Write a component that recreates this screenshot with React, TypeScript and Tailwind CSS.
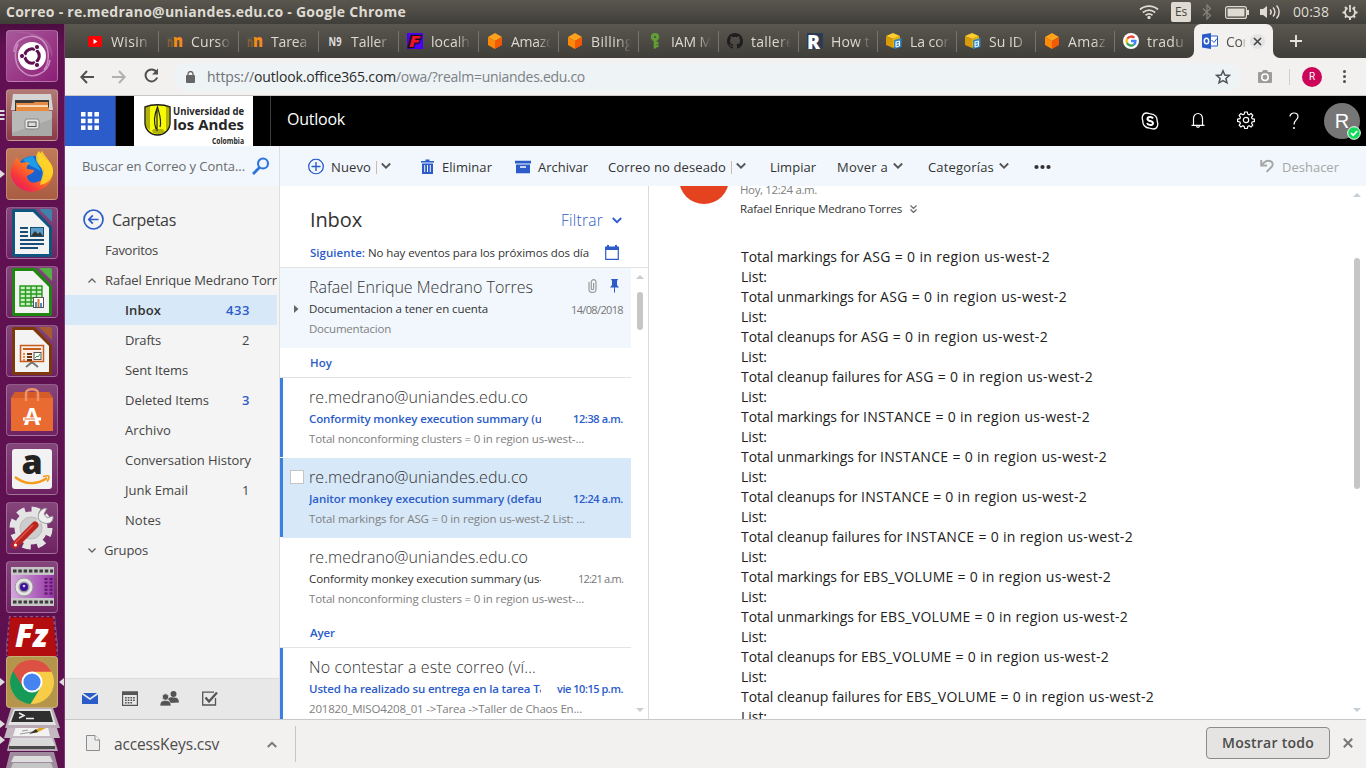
import React, { useLayoutEffect, useRef, useState } from "react";

/* Label that adjusts its tracking so the text fills exactly `w` pixels. */
function T({ w, className = "", children }: { w: number; className?: string; children: string }) {
  const ref = useRef<HTMLSpanElement>(null);
  const [ls, setLs] = useState(0);
  useLayoutEffect(() => {
    if (ref.current) {
      setLs((w - ref.current.getBoundingClientRect().width) / children.length);
    }
  }, []);
  return (
    <span className={"block shrink-0 whitespace-pre " + className} style={{ width: w }}>
      <span ref={ref} className="inline-block" style={{ letterSpacing: ls }}>
        {children}
      </span>
    </span>
  );
}

const Chevron = ({ className = "" }: { className?: string }) => (
  <svg className={"shrink-0 " + className} width="10" height="7" viewBox="0 0 10 7" fill="none" stroke="currentColor" strokeWidth="1.8">
    <path d="M0.8 1 5 5.2 9.2 1" />
  </svg>
);

/* ---------- Desktop launcher ---------- */

const Tile = ({ bg = "bg-linear-to-b from-[#84457a] to-[#6f2263]", left = false, right = false, children }: { bg?: string; left?: boolean; right?: boolean; children: React.ReactNode }) => (
  <div className={"relative h-[52px] w-[52px] shrink-0 rounded-[4px] border border-white/25 " + bg}>
    <svg width="50" height="50" viewBox="1 1 50 50">{children}</svg>
    {left && <svg className="absolute top-[20px] -left-[7px]" width="6" height="10"><path d="M0 1 5 5 0 9Z" fill="#ddd" /></svg>}
    {right && <svg className="absolute top-[20px] -right-[7px]" width="6" height="10"><path d="M6 1 1 5 6 9Z" fill="#ddd" /></svg>}
  </div>
);

const Doc = ({ c, d, children }: { c: string; d: string; children: React.ReactNode }) => (
  <>
    <path d="M8 2H29L46 20V48a2 2 0 0 1-2 2H8a2 2 0 0 1-2-2V4a2 2 0 0 1 2-2Z" fill={d} />
    <path d="M33 2H44a2 2 0 0 1 2 2V15Z" fill={c} />
    <path d="M9 5H27L43 21V47H9Z" fill="#f3f3f3" />
    {children}
  </>
);

function Launcher() {
  return (
    <div className="flex w-[65px] shrink-0 flex-col items-start gap-[7px] overflow-hidden border-r border-[#7d3a72] bg-[#5f1150] bg-linear-to-b from-[#4c0d40] via-[#611152] via-3% to-[#5c104e] pt-[6px] pl-[6px]">
      <Tile bg="bg-linear-to-br from-[#a8589b] to-[#8d1c78]">
        <path d="M8 22C8 8 26 2 36 10c8 7 8 22 2 30M44 30C42 44 26 50 17 42 8 36 8 22 12 14" stroke="#c98bc0" strokeWidth="1.6" fill="none" />
        <path d="M4 2C14 2 40 2 46 28 50 10 30 0 4 2Z" fill="#fff" opacity=".12" />
        <circle cx="26" cy="26" r="14" fill="#fff" />
        <circle cx="26" cy="26" r="7.2" fill="none" stroke="#5d1152" strokeWidth="3.2" />
        <path d="M26 26H14M26 26l6-10M26 26l6 10" stroke="#fff" strokeWidth="1.3" />
        <circle cx="26" cy="26" r="5.4" fill="#fff" />
        <g fill="#5d1152" stroke="#fff" strokeWidth="1"><circle cx="16" cy="26" r="2.6" /><circle cx="31" cy="17" r="2.6" /><circle cx="31" cy="35" r="2.6" /></g>
      </Tile>
      <div className="relative">
        <Tile bg="bg-linear-to-b from-[#b27a76] to-[#8b3a4a]">
          <path d="M7 5H45L47 21H5Z" fill="#d4d4d2" />
          <path d="M9 11H43V22H9Z" fill="#3b3835" />
          <path d="M10 14h17l2-1h13v9H10Z" fill="#e38b47" />
          <path d="M11 16H42V18H11Z" fill="#f7d9b8" /><path d="M10 18.500H43V22H10Z" fill="#e78a3e" />
          <path d="M6 22H46V47H6Z" fill="#a9a9a7" /><path d="M6 22H46V30L6 44Z" fill="#b9b9b7" />
          <rect x="19" y="30" width="14" height="10" rx="2" fill="#e6e6e5" stroke="#888" />
          <rect x="22" y="33" width="8" height="4.5" fill="#ddd" stroke="#555" />
        </Tile>
        <svg className="absolute top-[20px] -left-[6px]" width="5" height="13"><path d="M0 1h4l1 1-1 1H0ZM0 5h4l1 1-1 1H0ZM0 9h4l1 1-1 1H0Z" fill="#ddd" /></svg>
      </div>
      <Tile bg="bg-linear-to-b from-[#c17b59] to-[#a95d43]" left>
        <defs>
          <linearGradient id="fox" x1="1" y1="0" x2="0.2" y2="1"><stop offset="0" stopColor="#ffe53a" /><stop offset=".45" stopColor="#ff8a1c" /><stop offset=".8" stopColor="#f8353c" /><stop offset="1" stopColor="#e41c65" /></linearGradient>
        </defs>
        <circle cx="27" cy="25" r="17" fill="#1c63d0" />
        <path d="M27 8a17 17 0 0 0-10 4l6 5 12 6Z" fill="#1b9be8" />
        <path d="M5 25C5 18 9 14 10 9l5 6c3-1 6-1 9 0-3 2-4 4-3 6l7 1c0 3-4 4-7 6 0 5 5 8 10 6 5-1 8-5 7-11-3-5-7-9-5-16l3-4c3 6 11 11 11 22a21.5 21.5 0 0 1-42 3Z" fill="url(#fox)" />
        <path d="M33 3c-4 5-4 9 0 14 3 4 5 7 3 12l-2 8c8-1 14-8 13-16C46 13 37 11 33 3Z" fill="#ffd928" opacity=".85" />
      </Tile>
      <Tile>
        <Doc c="#3f83ad" d="#0f5580">
          <path d="M14 21h8M14 25h8M14 29h8M14 33h24M14 37h24M14 41h18" stroke="#174f78" strokeWidth="2" />
          <rect x="24.5" y="20.500" width="13" height="9" fill="#5b9dc8" stroke="#174f78" /><path d="M25 29l4-5 3 3 2-2 3 4Z" fill="#333" />
        </Doc>
      </Tile>
      <Tile>
        <Doc c="#53b148" d="#20860f">
          <path d="M14 20H36V40H14ZM14 24H36M14 28H36M14 32H36M14 36H36M19.500 20V40M25 20V40M30.500 20V40" stroke="#259a1c" strokeWidth="1.4" fill="#cdeec4" />
          <rect x="27.500" y="31.500" width="10" height="10" fill="#fff" stroke="#555" /><path d="M30 36v5M35 37v4" stroke="#4c8fc8" strokeWidth="2" /><path d="M32.500 33v8" stroke="#e37325" strokeWidth="2" />
        </Doc>
      </Tile>
      <Tile>
        <Doc c="#a85a31" d="#7d380c">
          <rect x="14.500" y="20.500" width="23" height="16" fill="#f8eee5" stroke="#c75c1f" strokeWidth="1.500" />
          <path d="M17 24H35" stroke="#c75c1f" strokeWidth="2" /><path d="M17 29h2M17 32h2M17 35h2" stroke="#e08b57" strokeWidth="1.800" /><path d="M21 29h5M21 32h5M21 35h5" stroke="#6b3510" strokeWidth="1.800" />
          <rect x="28" y="27.500" width="7" height="7" fill="#fff" stroke="#555" /><path d="M29 33l2-2 1 1 2-3" stroke="#2c9c31" fill="none" />
          <path d="M26 37v2M20 42l5-4h2l5 4" stroke="#777" strokeWidth="2" fill="none" />
        </Doc>
      </Tile>
      <Tile>
        <path d="M5 14 9 8H43L47 14V47H5Z" fill="#ea6b32" /><path d="M5 14 9 8H43L47 14Z" fill="#d55b28" />
        <path d="M20 17V9c0-5 12-5 12 0V17" stroke="#f0916a" strokeWidth="2.500" fill="none" />
        <text x="26" y="40.500" textAnchor="middle" fontFamily="Open Sans" fontWeight="700" fontSize="23" fill="#fff">A</text>
        <path d="M17 35H35" stroke="#fff" strokeWidth="3.200" fill="none" /><path d="M18.500 35H29" stroke="#ea6b32" strokeWidth="1" />
      </Tile>
      <Tile>
        <rect x="6" y="6" width="40" height="40" rx="3" fill="#f2f2f2" />
        <text x="26" y="31" textAnchor="middle" fontFamily="Open Sans" fontWeight="800" fontSize="34" fill="#222">a</text>
        <path d="M9 34c10 8 22 8 32 1" stroke="#f79a1c" strokeWidth="2.400" fill="none" /><path d="M37 33.500c4-1 6-1 6 0s-1 4-2 5" stroke="#f79a1c" strokeWidth="1.600" fill="none" />
      </Tile>
      <Tile>
        <circle cx="25" cy="26" r="18.500" fill="none" stroke="#e4e4e4" strokeWidth="6" strokeDasharray="8 6.530" />
        <circle cx="25" cy="26" r="14" fill="#e4e4e4" stroke="#e4e4e4" strokeWidth="5" /><circle cx="25" cy="26" r="11" fill="#cdcdcd" stroke="#bbb" />
        <path d="M29 23 37 15" stroke="#ddd" strokeWidth="5" /><path d="M34 19c-4-4-1-13 7-13l-3 6 3 4 6-2c1 7-6 10-13 5Z" fill="#efefef" stroke="#888" strokeWidth=".8" />
        <path d="M9 43 29 23" stroke="#bd2520" strokeWidth="7" strokeLinecap="round" /><path d="M9 41 27 23" stroke="#e0564f" strokeWidth="1.500" /><circle cx="9.500" cy="43" r="1.500" fill="#fff" />
      </Tile>
      <Tile>
        <defs><linearGradient id="film" x1="0" x2="1"><stop offset="0" stopColor="#d5a7dd" /><stop offset="1" stopColor="#9536a5" /></linearGradient></defs>
        <rect x="5" y="6" width="43" height="39" fill="url(#film)" />
        <path d="M5 6H48V14H5ZM5 37H48V45H5Z" fill="#c7c7c7" />
        <path d="M7 10H47M7 41H47" stroke="#3b3b3b" strokeWidth="3" strokeDasharray="3.500 1.800" />
        <path d="M40 17V34M45 17V34" stroke="#5d1569" strokeWidth="3" strokeDasharray="2 1.600" />
        <circle cx="18" cy="26" r="9" fill="#e4e4e4" stroke="#999" /><circle cx="18" cy="26" r="5.500" fill="#999" /><circle cx="18" cy="26" r="4" fill="#3b1399" /><circle cx="18" cy="25" r="1.300" fill="#d5c5ff" />
      </Tile>
      <div className="-mt-[4px] flex h-[155px] w-[59px] shrink-0 flex-col items-start">
        <svg className="shrink-0" width="52" height="40" viewBox="0 0 52 40">
          <path d="M3 0H49L53 40H-1Z" fill="#93507f" />
          <path d="M4 1H47L51 40H1Z" fill="#b40d0f" />
          <path d="M5 1H47M3 3 1 39M48 3 51 39" stroke="#5f1150" strokeWidth="1.800" strokeDasharray="2.500 3" fill="none" />
          <text x="9" y="31" fontFamily="Open Sans" fontStyle="italic" fontWeight="800" fontSize="32" fill="#fff" textLength="33" lengthAdjust="spacingAndGlyphs">Fz</text>
        </svg>
        <Tile bg="bg-[#b5954b]" left right>
          <circle cx="26" cy="26" r="22" fill="#f7cc46" />
          <path d="M26 26 7 15A22 22 0 0 1 45.300 15.500H26Z" fill="#dd4b3e" />
          <path d="M26 26 7 15a22 22 0 0 0 17.500 33L35 31Z" fill="#159a58" />
          <path d="M7 15 17 31l9-15.500H45.300A22 22 0 0 0 7 15Z" fill="#dd5144" />
          <circle cx="26" cy="26" r="10.500" fill="#fff" /><circle cx="26" cy="26" r="8.600" fill="#4583f0" />
        </Tile>
        <svg className="-ml-[6px] shrink-0" width="65" height="60" viewBox="0 0 65 60">
          <path d="M10 44H54L58 60H6Z" fill="#a08a9d" /><path d="M14 48H50L53 54H11Z" fill="#ddd" /><path d="M13 55H51L53 60H11Z" fill="#c5c5c5" />
          <path d="M10 30H54L58 43H7Z" fill="#b7a7b4" /><path d="M12 30H52L55 38H9Z" fill="#d9d9d9" /><path d="M9 38H55V41H9Z" fill="#4a4a4a" />
          <path d="M9 14H55L60 30H4Z" fill="#c4b8c1" /><path d="M17 15H47L50 28H13Z" fill="#f2f2f2" /><path d="M20 26 32 24M22 23 28 22" stroke="#999" /><path d="M32 24 44 17l2 3-10 5Z" fill="#d9a520" /><path d="M29 26 36 21l2 3Z" fill="#333" />
          <path d="M11 0H53L60 20H5Z" fill="#b8abb5" /><path d="M14 1H51L56 17H8Z" fill="#e2e2e2" /><path d="M15 3H50L53 14H11Z" fill="#2f2f2f" />
          <path d="M19 5l5 2.500-5 2.500M26 10.500h8" stroke="#eee" strokeWidth="1.500" fill="none" />
          <path d="M0 12 5 16 0 20ZM0 28 5 32 0 36Z" fill="#ddd" />
        </svg>
      </div>
    </div>
  );
}

/* ---------- Tab strip ---------- */

const Cube = () => <><path d="M8 0 15 4 8 8 1 4Z" fill="#ffa21c" /><path d="M1 4 8 8V16L1 12Z" fill="#ff8a0a" /><path d="M15 4 8 8V16L15 12Z" fill="#f45a04" /></>;
const Moodle = () => (
  <>
    <path d="M0 6 8 3" stroke="#555" strokeWidth="1.500" />
    <text x="0" y="13.500" fontFamily="Open Sans" fontWeight="700" fontSize="14" fill="#8a6238" textLength="6" lengthAdjust="spacingAndGlyphs">n</text>
    <text x="6" y="13.500" fontFamily="Open Sans" fontWeight="800" fontSize="17" fill="#f58a1c" textLength="10" lengthAdjust="spacingAndGlyphs">n</text>
  </>
);
const AwsDoc = () => <><path d="M7 0 14 3 7 6 0 3Z" fill="#ffce2e" /><path d="M0 3 7 6V15L0 12Z" fill="#d89a06" /><path d="M7 6 14 3V9L7 15Z" fill="#f0b400" /><path d="M8 7 15.500 5V14L8 16Z" fill="#2f86c4" /><path d="M10 9 13.500 8M10 11.500 13.500 10.500M10 14 13.500 13M10 8.500V14M13.500 8V13" stroke="#fff" /></>;

const tabs: { label: string; w: number; icon: React.ReactNode }[] = [
  { label: "Wisin", w: 37, icon: <><rect x="1" y="3" width="14" height="11" rx="2.500" fill="#f00" /><path d="M6.500 6 10.500 8.500 6.500 11Z" fill="#fff" /></> },
  { label: "Curso", w: 39, icon: <Moodle /> },
  { label: "Tarea", w: 36, icon: <Moodle /> },
  { label: "Taller", w: 36, icon: <text x="1.500" y="12.500" fontFamily="Open Sans" fontWeight="700" fontSize="11.500" fill="#ddd" textLength="13" lengthAdjust="spacingAndGlyphs">N9</text> },
  { label: "localh", w: 39, icon: <><rect width="16" height="16" fill="#4b00f5" /><text x="2" y="14" fontFamily="Open Sans" fontStyle="italic" fontWeight="800" fontSize="15.500" fill="#f0102a" stroke="#111" strokeWidth="2.500" paintOrder="stroke" textLength="11" lengthAdjust="spacingAndGlyphs">F</text></> },
  { label: "Amazo", w: 43, icon: <Cube /> },
  { label: "Billing", w: 42, icon: <Cube /> },
  { label: "IAM M", w: 41, icon: <><circle cx="8" cy="4" r="2.600" fill="none" stroke="#609e35" strokeWidth="3.200" /><path d="M8 6V15.500M9 10h2.500M9 13h2.500" stroke="#609e35" strokeWidth="2.600" /></> },
  { label: "tallere", w: 43, icon: <path fill="#1e1e1e" d="M8 0C3.580 0 0 3.580 0 8c0 3.540 2.290 6.530 5.470 7.590.4.070.55-.17.55-.38 0-.19-.01-.82-.01-1.490-2.010.37-2.530-.49-2.690-.94-.09-.23-.48-.94-.82-1.130-.28-.15-.68-.52-.01-.53.63-.01 1.080.58 1.230.82.72 1.210 1.870.87 2.330.66.07-.52.28-.87.51-1.070-1.780-.2-3.640-.89-3.640-3.950 0-.87.31-1.590.82-2.150-.08-.2-.36-1.020.08-2.120 0 0 .67-.21 2.200.82a7.600 7.600 0 0 1 4 0c1.530-1.040 2.200-.82 2.200-.82.44 1.100.16 1.920.08 2.120.51.56.82 1.270.82 2.150 0 3.070-1.870 3.750-3.650 3.950.29.25.54.73.54 1.480 0 1.070-.01 1.930-.01 2.200 0 .21.15.46.55.38A8 8 0 0 0 16 8c0-4.420-3.580-8-8-8Z" /> },
  { label: "How t", w: 39, icon: <><rect width="16" height="16" fill="#2b3b55" /><text x="0" y="15.500" fontFamily="Open Sans" fontWeight="800" fontSize="20" fill="#fff" textLength="13" lengthAdjust="spacingAndGlyphs">R</text></> },
  { label: "La con", w: 42, icon: <AwsDoc /> },
  { label: "Su ID", w: 34, icon: <AwsDoc /> },
  { label: "Amaz", w: 38, icon: <Cube /> },
  { label: "tradu", w: 37, icon: <><circle cx="8" cy="8" r="8" fill="#fff" /><g fill="none" strokeWidth="2.300"><path d="M4.300 5.800A4.500 4.500 0 0 1 11.400 4.800" stroke="#ea4335" /><path d="M4.100 5.800a4.500 4.500 0 0 0 0 4.400" stroke="#fbbc05" /><path d="M4.100 10a4.500 4.500 0 0 0 6.700 1.700" stroke="#34a853" /><path d="M8 8h4.500a4.500 4.500 0 0 1-1.700 3.700" stroke="#4285f4" /></g></> },
];

function TabStrip() {
  return (
    <div className="flex h-[34px] shrink-0 items-center bg-linear-to-b from-[#5a574f] to-[#403e39] pl-[14px] text-[14px] text-[#dcd9cf]">
      {tabs.map((t, i) => (
        <div key={i} className={(i < 9 ? "w-[80px]" : "w-[79px]") + " flex h-[21px] shrink-0 items-center pl-[8px] " + (i === 13 ? "" : "border-r border-[#77746b]")}>
          <svg className="shrink-0" width="16" height="16" viewBox="0 0 16 16">{t.icon}</svg>
          <div className="ml-[8px] w-[40px] mask-r-from-65% mask-r-to-100%"><T w={t.w}>{t.label}</T></div>
        </div>
      ))}
      <div className="relative flex h-full w-[79px] shrink-0 items-center rounded-t-[7px] bg-[#f2f1f0] pl-[8px] text-[#55534d]">
        <svg className="shrink-0" width="16" height="16" viewBox="0 0 16 16"><path d="M8 3h7.500v10H8Z" fill="#fff" stroke="#2a5cc9" /><path d="M9.500 7 12 9.500 15 5.500" stroke="#2a5cc9" fill="none" /><path d="M0 1.500 9 0V16L0 14.500Z" fill="#2a5cc9" /><ellipse cx="4.500" cy="8" rx="2.200" ry="2.800" fill="none" stroke="#fff" strokeWidth="1.500" /></svg>
        <div className="ml-[8px] w-[20px] overflow-hidden mask-r-from-75%"><T w={22}>Cor</T></div>
        <div className="ml-[4px] flex h-[15px] w-[15px] items-center justify-center rounded-full bg-[#e3e3e4]"><svg width="9" height="9" viewBox="0 0 9 9"><path d="M1 1 8 8M8 1 1 8" stroke="#444" strokeWidth="1.600" /></svg></div>
        <svg className="absolute bottom-0 -left-[7px]" width="7" height="7"><path d="M7 0V7H0A7 7 0 0 0 7 0Z" fill="#f2f1f0" /></svg>
        <svg className="absolute -right-[7px] bottom-0" width="7" height="7"><path d="M0 0V7H7A7 7 0 0 1 0 0Z" fill="#f2f1f0" /></svg>
      </div>
      <svg className="ml-[17px]" width="12" height="12" viewBox="0 0 12 12"><path d="M6 0V12M0 6H12" stroke="#e5e3db" strokeWidth="1.900" /></svg>
    </div>
  );
}

function AddressBar() {
  return (
    <div className="flex h-[38px] shrink-0 items-center border-b border-[#c9c8c6] bg-[#f2f1f0] text-[14px]">
      <svg className="ml-[15px] shrink-0" width="14" height="14" viewBox="0 0 14 14" fill="none" stroke="#505050" strokeWidth="2"><path d="M14 7H1.500M7 1 1.300 7 7 13" /></svg>
      <svg className="ml-[18px] shrink-0" width="14" height="14" viewBox="0 0 14 14" fill="none" stroke="#b1b0af" strokeWidth="2"><path d="M0 7H12.500M7 1 12.700 7 7 13" /></svg>
      <svg className="ml-[18px] shrink-0 -translate-y-[1px]" width="15" height="15" viewBox="0 0 15 15"><path d="M12.500 4A6 6 0 1 0 13.200 9.500" fill="none" stroke="#505050" strokeWidth="2" /><path d="M14 0.500V6.500H8Z" fill="#505050" /></svg>
      <div className="ml-[15px] flex h-[28px] w-[1066px] items-center rounded-full bg-[#eef3f5] pl-[12px]">
        <svg className="shrink-0" width="9" height="12" viewBox="0 0 9 12"><rect y="4" width="9" height="8" rx="1" fill="#666" /><path d="M2 5V3a2.500 2.500 0 0 1 5 0v2" stroke="#666" strokeWidth="1.300" fill="none" /></svg>
        <div className="ml-[12px] flex">
          <T w={47} className="text-[#6d7275]">https://</T>
          <T w={142} className="text-[#2a2a2a]">outlook.office365.com</T>
          <T w={189} className="text-[#7c8185]">/owa/?realm=uniandes.edu.co</T>
        </div>
        <svg className="mr-[9px] ml-auto shrink-0" width="16" height="16" viewBox="0 0 16 16"><path d="M8 1.800 9.800 6 14.300 6.400 10.900 9.400 12 13.800 8 11.500 4 13.800 5.100 9.400 1.700 6.400 6.200 6Z" fill="none" stroke="#505458" strokeWidth="1.500" /></svg>
      </div>
      <svg className="ml-[18px] shrink-0" width="14" height="13" viewBox="0 0 14 13"><path d="M1 2H4L5 0H9L10 2H13a1 1 0 0 1 1 1V12a1 1 0 0 1-1 1H1a1 1 0 0 1-1-1V3a1 1 0 0 1 1-1Z" fill="#9c9c9c" /><circle cx="7" cy="7.300" r="3.200" fill="#9c9c9c" stroke="#fff" strokeWidth="1.500" /></svg>
      <div className="ml-[17px] h-4 w-px bg-[#cfcecc]" />
      <div className="ml-[12px] flex h-5 w-5 items-center justify-center rounded-full bg-[#cc0558] font-[Roboto] text-[10px] text-white">R</div>
      <div className="ml-[21px] flex flex-col gap-[2px]"><i className="h-[3px] w-[3px] rounded-full bg-[#505050]" /><i className="h-[3px] w-[3px] rounded-full bg-[#505050]" /><i className="h-[3px] w-[3px] rounded-full bg-[#505050]" /></div>
    </div>
  );
}

/* ---------- Outlook ---------- */

function OutlookHeader() {
  return (
    <div className="flex h-[50px] shrink-0 items-center bg-black text-white">
      <div className="flex h-full w-[51px] shrink-0 items-center justify-center border-r border-[#26407e] bg-[#2b5cca]">
        <svg width="18" height="18" viewBox="0 0 18 18" fill="#fff">
          {[0, 7, 14].map((y) => [0, 7, 14].map((x) => <rect key={x + "-" + y} x={x * 0.96} y={y * 0.96} width="4.500" height="4.500" />))}
        </svg>
      </div>
      <svg className="ml-[18px] shrink-0 bg-white" width="119" height="50" viewBox="0 0 119 50">
        <path d="M11 11C18 8 29 8 36 11V27C36 33 31 39 23.500 39 16 39 11 33 11 27Z" fill="#f7fb05" stroke="#1a1a1a" strokeWidth="1.400" />
        <path d="M11 11c2-2 4-2 5-2v25c-3-2-5-4-5-8ZM36 11c-2-2-3-2-4-2v26c3-2 4-5 4-9ZM18 36c5 3 9 2 13 0l-2-3H19Z" fill="#5c5c14" opacity=".45" />
        <path d="M22 33C19 25 21 17 23.500 11 25 17 28 24 26 31M23 14V35" fill="none" stroke="#222" strokeWidth="1.200" />
        <g fontFamily="Open Sans" fontWeight="700" fill="#262626">
          <text x="39" y="19" fontSize="11" textLength="71" lengthAdjust="spacingAndGlyphs">Universidad de</text>
          <text x="39" y="34" fontSize="15" textLength="71" lengthAdjust="spacingAndGlyphs">los Andes</text>
          <text x="78" y="47.500" fontSize="8" textLength="32" lengthAdjust="spacingAndGlyphs">Colombia</text>
        </g>
      </svg>
      <div className="ml-[17px] h-full w-px bg-[#3c3c3c]" />
      <T w={58} className="ml-[16px] -translate-y-[2px] text-[16px]">Outlook</T>
      <svg className="mr-[32px] ml-auto shrink-0" width="18" height="18" viewBox="0 0 18 18" fill="none" stroke="#fff" strokeWidth="1.300"><path d="M5.500 1C8 1 8 1.800 9.500 1.800 14 1.800 16.500 5.500 16.200 9.500 17.500 12 16.500 17 12.500 17 11 17 10 16.200 8.500 16.200 4 16 1.500 12.500 1.800 8.500 0.500 6 1.500 1 5.500 1Z" /><path d="M12 6.500C11 4.500 6.500 4.500 6.500 7c0 2.500 5.500 1.500 5.500 4.200 0 2.500-5 2.300-6 0" strokeWidth="2" /></svg>
      <svg className="mr-[32px] shrink-0 -translate-y-[1px]" width="14" height="17" viewBox="0 0 14 17" fill="none" stroke="#fff" strokeWidth="1.200"><path d="M2.500 13V6.500a4.500 5 0 0 1 9 0V13M0.500 13.300H13.500M5.500 13.500c0 2.500 3 2.500 3 0" /></svg>
      <svg className="mr-[34px] shrink-0 -translate-y-[1px]" width="18" height="18" viewBox="0 0 18 18" fill="none" stroke="#fff" strokeWidth="1.200"><circle cx="9" cy="9" r="2.700" /><path d="M7.700 1h2.600l.5 2.200 1.300.6 2-1.200 1.700 1.800-1.200 2 .5 1.300 2.300.5v2.200l-2.300.5-.5 1.300 1.200 2-1.700 1.800-2-1.200-1.300.6-.5 2.100H7.700l-.5-2.100-1.300-.6-2 1.200-1.700-1.800 1.200-2-.5-1.300-2.300-.5V8.200l2.300-.5.500-1.300-1.200-2 1.700-1.800 2 1.200 1.300-.6Z" /></svg>
      <svg className="mr-[25px] shrink-0 -translate-y-[1px]" width="10" height="17" viewBox="0 0 10 17" fill="none" stroke="#fff" strokeWidth="1.200"><path d="M1 4.500C1 2.500 2.800 1 5 1s4 1.300 4 3.500C9 8 5 8 5 12.500" /><path d="M5 15V17" strokeWidth="1.500" /></svg>
      <div className="relative mr-[6px] flex h-9 w-9 shrink-0 items-center justify-center rounded-full bg-[#767676] font-['Liberation_Sans'] text-[20px]">
        R
        <svg className="absolute -right-[1px] -bottom-[1px]" width="14" height="14" viewBox="0 0 14 14"><circle cx="7" cy="7" r="6.300" fill="#12d95a" stroke="#fff" strokeWidth="1" /><path d="M4 7 6.200 9.300 10.200 5" stroke="#fff" strokeWidth="1.800" fill="none" /></svg>
      </div>
    </div>
  );
}

function CommandBar() {
  return (
    <div className="relative z-10 flex h-[40px] shrink-0 items-center bg-[#f1f7fc] pt-[3px] text-[13px] text-[#333]">
      <svg className="ml-[28px] shrink-0 -translate-y-[1.5px]" width="16" height="16" viewBox="0 0 16 16" fill="none" stroke="#2b5cca"><circle cx="8" cy="8" r="7.300" strokeWidth="1.300" /><path d="M8 3.500V12.500M3.500 8H12.500" strokeWidth="1.400" /></svg>
      <T w={40} className="ml-[7px]">Nuevo</T>
      <div className="ml-[5px] h-[13px] w-px bg-[#d0b9a5]" />
      <Chevron className="ml-[4px] -translate-y-[1.5px] text-[#555]" />
      <svg className="ml-[30px] shrink-0 -translate-y-[1px]" width="13" height="15" viewBox="0 0 13 15"><path d="M4.500 0.500H8.500V2H13V3.500H0V2H4.500ZM1 4.500H12V15H1Z" fill="#2b5cca" /><path d="M3.700 6V13M6.500 6V13M9.300 6V13" stroke="#eff6fc" strokeWidth="1" /></svg>
      <T w={50} className="ml-[8px]">Eliminar</T>
      <svg className="ml-[23px] shrink-0 -translate-y-[0.5px]" width="16" height="13" viewBox="0 0 16 13"><path d="M0 0H16V3H0ZM1 4H15V13H1Z" fill="#2b5cca" /><path d="M5 6.500H11" stroke="#fff" strokeWidth="1.300" /></svg>
      <T w={50} className="ml-[7px]">Archivar</T>
      <T w={118} className="ml-[20px]">Correo no deseado</T>
      <div className="ml-[5px] h-[13px] w-px bg-[#d0b9a5]" />
      <Chevron className="ml-[4px] -translate-y-[1.5px] text-[#555]" />
      <T w={46} className="ml-[24px]">Limpiar</T>
      <T w={51} className="ml-[21px]">Mover a</T>
      <Chevron className="ml-[5px] -translate-y-[1.5px] text-[#555]" />
      <T w={66} className="ml-[25px]">Categorías</T>
      <Chevron className="ml-[5px] -translate-y-[1.5px] text-[#555]" />
      <svg className="ml-[25px] shrink-0 -translate-y-[0.5px]" width="17" height="5"><circle cx="2.500" cy="2.500" r="2.100" fill="#333" /><circle cx="8.500" cy="2.500" r="2.100" fill="#333" /><circle cx="14.500" cy="2.500" r="2.100" fill="#333" /></svg>
      <svg className="mr-[8px] ml-auto shrink-0 -translate-y-[1.5px]" width="14" height="13" viewBox="0 0 14 13" fill="none" stroke="#a6a6a6" strokeWidth="1.900"><path d="M1.200 0.500V6H7M1.500 5.700C4 2.500 7 0.500 10 1.500 13 2.500 13.500 5 11.500 7.500L6.500 12.500" /></svg>
      <T w={57} className="mr-[27px] text-[#a6a6a6]">Deshacer</T>
    </div>
  );
}

const folders: [string, number, string, boolean][] = [
  ["Inbox", 36, "433", true], ["Drafts", 36, "2", false], ["Sent Items", 63, "", false], ["Deleted Items", 84, "3", false], ["Archivo", 46, "", false],
  ["Conversation History", 126, "", false], ["Junk Email", 63, "1", false], ["Notes", 36, "", false],
];

function FolderPane() {
  return (
    <div className="flex w-[215px] shrink-0 flex-col border-r border-[#dfdfdf] bg-[#f4f4f4] text-[13px] text-[#444]">
      <div className="flex h-[40px] shrink-0 items-center bg-[#f1f7fc] pl-[17px] text-[#6b6b6b]">
        <T w={163} className="translate-y-[1px]">Buscar en Correo y Conta...</T>
        <svg className="ml-[7px] shrink-0" width="18" height="18" viewBox="0 0 18 18" fill="none" stroke="#2f74dc"><circle cx="11" cy="6.500" r="5" strokeWidth="2.100" /><path d="M7.500 10.500 1 17" strokeWidth="2.700" /></svg>
      </div>
      <div className="mt-[19px] flex h-[30px] items-center pl-[18px]">
        <svg className="shrink-0 -translate-y-[1px]" width="21" height="21" viewBox="0 0 21 21" fill="none" stroke="#2b5cca" strokeWidth="1.700"><circle cx="10.500" cy="10.500" r="9.500" /><path d="M15.500 10.500H6M9.800 6.300 5.800 10.500 9.800 14.700" /></svg>
        <T w={64} className="ml-[8px] text-[16px] text-[#3b3b3b]">Carpetas</T>
      </div>
      <div className="flex h-[30px] items-center pt-[2px] pl-[40px]"><T w={53}>Favoritos</T></div>
      <div className="flex h-[30px] items-center overflow-hidden pt-[2px] pl-[23px]">
        <svg className="shrink-0 -translate-y-[1px]" width="8" height="5" fill="none" stroke="#666" strokeWidth="1.400"><path d="M0.500 4.500 4 1 7.500 4.500" /></svg>
        <T w={172} className="ml-[9px]">Rafael Enrique Medrano Torr</T>
      </div>
      {folders.map(([name, w, n, on]) => (
        <div key={name} className={"mr-[2px] flex h-[30px] items-center justify-between pt-[2px] pr-[27px] pl-[60px] " + (on ? "bg-[#d7e8f8] font-semibold text-[#333]" : "")}>
          <T w={w}>{name}</T>
          {n && <T w={n.length * 8} className={on || n === "3" ? "font-semibold text-[#2b5cca]" : ""}>{n}</T>}
        </div>
      ))}
      <div className="flex h-[30px] items-center pt-[2px] pl-[23px]">
        <svg className="shrink-0 -translate-y-[1px]" width="8" height="5" fill="none" stroke="#666" strokeWidth="1.400"><path d="M0.500 0.500 4 4 7.500 0.500" /></svg>
        <T w={44} className="ml-[8px]">Grupos</T>
      </div>
      <div className="mt-auto flex h-[41px] shrink-0 items-center border-t border-[#dcdcdc] bg-[#e8e8e8] pl-[17px]">
        <svg className="shrink-0 -translate-y-[1px]" width="16" height="11" viewBox="0 0 16 11"><path d="M0 1.500 8 7 16 1.500V11H0Z" fill="#2b5cca" /><path d="M1 0H15L8 5Z" fill="#2b5cca" /></svg>
        <svg className="ml-[24px] shrink-0 -translate-y-[1px]" width="16" height="15" viewBox="0 0 16 15"><path d="M0.600 1H15.400V14.400H0.600Z" fill="none" stroke="#555" strokeWidth="1.200" /><path d="M0 0.500H16V4H0Z" fill="#555" /><path d="M3 6.700H13.500M3 9.200H13.500M3 11.700H11" stroke="#555" strokeWidth="1.500" strokeDasharray="1.700 1" /></svg>
        <svg className="ml-[22px] shrink-0 -translate-y-[1px]" width="19" height="15" viewBox="0 0 19 15" fill="#555"><circle cx="13.500" cy="3" r="3" /><path d="M9.500 12V9.500L7.500 8C9 6.500 11 6 13.500 6.500 17 6 19 8 19 11.500Z" /><g stroke="#e8e8e8" strokeWidth=".7"><circle cx="5.500" cy="6" r="3.200" /><path d="M0 15C0 10.500 2 9.500 5.500 9.500S11 10.500 11 15Z" /></g></svg>
        <svg className="ml-[23px] shrink-0 -translate-y-[1px]" width="16" height="15" viewBox="0 0 16 15" fill="none" stroke="#555"><path d="M13.500 7V14H0.700V1.200H12" strokeWidth="1.300" /><path d="M3.500 6.500 7 10.500 15 1.500" strokeWidth="2.300" /></svg>
      </div>
    </div>
  );
}

type Mail = { from: string; fw: number; subj: string; sw: number; time: string; tw: number; prev: string; pw: number; unread?: boolean; selected?: boolean };

function MailRow({ m }: { m: Mail }) {
  return (
    <div className="flex h-[80px] w-[351px] shrink-0">
      <div className={"mb-px w-[3px] " + (m.unread ? "bg-[#3b7fe0]" : "")} />
      <div className={"flex flex-1 flex-col pt-[9px] " + (m.selected ? "bg-[#d7e8f8]" : "")}>
        <div className="flex h-[20px] items-center pl-[7px]">
          <div className={"h-[14px] w-[14px] shrink-0 " + (m.selected ? "border border-[#c5c5c5] bg-white" : "")} />
          <T w={m.fw} className="ml-[5px] text-[16px] leading-5 font-[350] text-[#333]">{m.from}</T>
        </div>
        <div className={"flex h-[24px] items-center justify-between pr-[8px] pl-[26px] text-[11.5px] " + (m.unread ? "font-semibold text-[#2b5cca]" : "text-[#333]")}>
          <div className="w-[232px] overflow-hidden"><T w={m.sw}>{m.subj}</T></div>
          <T w={m.tw} className={m.unread ? "text-[11px]" : "text-[11px] text-[#767676]"}>{m.time}</T>
        </div>
        <T w={m.pw} className="ml-[26px] text-[11.5px] leading-4 text-[#808080]">{m.prev}</T>
      </div>
    </div>
  );
}

const prevText = "Total nonconforming clusters = 0 in region us-west-...";
const today: Mail[] = [
  { from: "re.medrano@uniandes.edu.co", fw: 219, subj: "Conformity monkey execution summary (u", sw: 233, time: "12:38 a.m.", tw: 50, prev: prevText, pw: 275, unread: true },
  { from: "re.medrano@uniandes.edu.co", fw: 219, subj: "Janitor monkey execution summary (defau", sw: 233, time: "12:24 a.m.", tw: 50, prev: "Total markings for ASG = 0 in region us-west-2 List: ...", pw: 276, unread: true, selected: true },
  { from: "re.medrano@uniandes.edu.co", fw: 219, subj: "Conformity monkey execution summary (us-", sw: 234, time: "12:21 a.m.", tw: 45, prev: prevText, pw: 275 },
];
const yesterday: Mail = { from: "No contestar a este correo (ví...", fw: 227, subj: "Usted ha realizado su entrega en la tarea Ta", sw: 237, time: "vie 10:15 p.m.", tw: 66, prev: "201820_MISO4208_01 ->Tarea ->Taller de Chaos En...", pw: 273, unread: true };

const GroupHead = ({ label, w }: { label: string; w: number }) => (
  <div className="flex h-[30px] w-[351px] shrink-0 items-center border-b border-[#e3e3e3] pl-[30px] text-[11.5px] font-semibold text-[#2b5cca]"><T w={w}>{label}</T></div>
);

const Scroll = ({ thumb }: { thumb: string }) => (
  <div className="flex w-[18px] shrink-0 flex-col items-center pt-[7px] pb-[7px]">
    <svg className="shrink-0" width="8" height="4"><path d="M4 0 8 4H0Z" fill="#c5ced3" /></svg>
    <div className={"w-[6px] shrink-0 rounded-full bg-[#c6c6c6] " + thumb} />
    <svg className="mt-auto shrink-0" width="8" height="4"><path d="M0 0H8L4 4Z" fill="#c5ced3" /></svg>
  </div>
);

function MessageList() {
  return (
    <div className="flex w-[369px] shrink-0 flex-col overflow-hidden border-r border-[#dadada]">
      <div className="flex h-[82px] shrink-0 flex-col border-b border-[#e3e3e3] pt-[20px]">
        <div className="flex h-[28px] items-center pl-[30px]">
          <T w={52} className="text-[20px] text-[#333]">Inbox</T>
          <T w={42} className="ml-[199px] translate-y-[1px] text-[15.5px] font-[350] text-[#2b5cca]">Filtrar</T>
          <Chevron className="ml-[9px] text-[#2b5cca]" />
        </div>
        <div className="mt-[9px] flex h-[20px] items-center pl-[30px] text-[11.5px]">
          <T w={55} className="font-semibold text-[#2b5cca]">Siguiente:</T>
          <T w={221} className="ml-[3px] text-[#333]">No hay eventos para los próximos dos día</T>
          <svg className="ml-[16px] shrink-0 -translate-y-[1px]" width="14" height="15" viewBox="0 0 14 15"><path d="M0.700 2.200H13.300V14.300H0.700Z" fill="none" stroke="#2b5cca" strokeWidth="1.200" /><path d="M0 2H14V5H0ZM2 0H4V3H2ZM10 0H12V3H10Z" fill="#2b5cca" /></svg>
        </div>
      </div>
      <div className="flex min-h-0 flex-1">
        <div className="flex w-[351px] shrink-0 flex-col overflow-hidden">
          <div className="flex h-[80px] shrink-0 flex-col bg-[#f1f7fc] pt-[9px]">
            <div className="flex h-[20px] items-center pl-[29px]">
              <T w={224} className="text-[16px] leading-5 font-[350] text-[#333]">Rafael Enrique Medrano Torres</T>
              <svg className="ml-[55px] shrink-0 -translate-y-[1px]" width="9" height="14" viewBox="0 0 9 14" fill="none" stroke="#999" strokeWidth="1.200"><path d="M1 3V10a3.400 3.400 0 0 0 7 0V3a2.200 2.200 0 0 0-4.700 0V9.500a1.100 1.100 0 0 0 2.300 0V4" /></svg>
              <svg className="ml-[13px] shrink-0 -translate-y-[1px]" width="9" height="14" viewBox="0 0 9 14" fill="#2b5cca"><path d="M1.200 0H7.800V1.200H7V6L9 8.500H5V13.500H4V8.500H0L2 6V1.200H1.200Z" /></svg>
            </div>
            <div className="flex h-[24px] items-center pl-[14px] text-[11.5px]">
              <svg className="shrink-0" width="5" height="8"><path d="M0 0 4.500 4 0 8Z" fill="#666" /></svg>
              <T w={179} className="ml-[10px] text-[#333]">Documentacion a tener en cuenta</T>
              <T w={52} className="ml-[83px] translate-y-[0.5px] text-[11px] text-[#767676]">14/08/2018</T>
            </div>
            <T w={82} className="ml-[29px] text-[11.5px] leading-4 text-[#808080]">Documentacion</T>
          </div>
          <GroupHead label="Hoy" w={22} />
          {today.map((m, i) => <MailRow key={i} m={m} />)}
          <GroupHead label="Ayer" w={25} />
          <MailRow m={yesterday} />
        </div>
        <Scroll thumb="mt-[13px] h-[38px]" />
      </div>
    </div>
  );
}

/* Each line is set in two runs: the words up to the resource name, then the rest. */
const lines: [string, number, string, number][] = [
  ["Total markings for ", 122, "ASG = 0 in region us-west-2", 187], ["Total unmarkings for ", 139, "ASG = 0 in region us-west-2", 187],
  ["Total cleanups for ", 120, "ASG = 0 in region us-west-2", 187], ["Total cleanup failures for ", 165, "ASG = 0 in region us-west-2", 187],
  ["Total markings for ", 122, "INSTANCE = 0 in region us-west-2", 227], ["Total unmarkings for ", 139, "INSTANCE = 0 in region us-west-2", 227],
  ["Total cleanups for ", 120, "INSTANCE = 0 in region us-west-2", 226], ["Total cleanup failures for ", 165, "INSTANCE = 0 in region us-west-2", 227],
  ["Total markings for ", 122, "EBS_VOLUME = 0 in region us-west-2", 248], ["Total unmarkings for ", 139, "EBS_VOLUME = 0 in region us-west-2", 248],
  ["Total cleanups for ", 120, "EBS_VOLUME = 0 in region us-west-2", 248], ["Total cleanup failures for ", 165, "EBS_VOLUME = 0 in region us-west-2", 248],
];

function Reader() {
  return (
    <div className="flex min-w-0 flex-1">
      <div className="flex min-w-0 flex-1 flex-col">
        <div className="flex h-[61px] shrink-0 pl-[30px]">
          <div className="-mt-[32px] flex h-[50px] w-[50px] shrink-0 items-center justify-center rounded-full bg-[#e5431f] text-[20px] leading-none text-white">R</div>
          <div className="ml-[11px] flex flex-col gap-[3px] text-[11.5px] leading-4">
            <T w={77} className="-mt-[4px] text-[#808080]">Hoy, 12:24 a.m.</T>
            <div className="flex items-center">
              <T w={162} className="text-[#333]">Rafael Enrique Medrano Torres</T>
              <svg className="ml-[8px]" width="7" height="8" fill="none" stroke="#666" strokeWidth="1.200"><path d="M0.500 0.500 3.500 3.500 6.500 0.500M0.500 4.500 3.500 7.500 6.500 4.500" /></svg>
            </div>
          </div>
        </div>
        <div className="min-h-0 flex-1 overflow-hidden pl-[92px] text-[14px] leading-5 text-[#212121]">
          {lines.map(([a, aw, b, bw], i) => (
            <div key={i}><div className="flex"><T w={aw}>{a}</T><T w={bw}>{b}</T></div><T w={26}>List:</T></div>
          ))}
        </div>
      </div>
      <Scroll thumb="mt-[61px] h-[231px]" />
    </div>
  );
}

export default function App() {
  return (
    <div className="flex h-[768px] w-[1366px] flex-col overflow-hidden bg-white font-['Open_Sans','Noto_Sans',sans-serif]">
      <div className="flex h-6 shrink-0 items-center bg-linear-to-b from-[#5a574f] to-[#403e39] pl-[6px] text-[13.5px] text-[#dfdbd2]">
        <T w={400} className="-translate-y-[1px] text-[14px] font-bold">Correo - re.medrano@uniandes.edu.co - Google Chrome</T>
        <svg className="mr-[12px] ml-auto" width="20" height="14" viewBox="0 0 20 14" fill="none" stroke="#dfdbd2" strokeWidth="1.700"><path d="M1 4.500C6 0 14 0 19 4.500M3.800 7.500c4-3 8.500-3 12.400 0M6.500 10.300c2.400-1.800 4.600-1.800 7 0" /><circle cx="10" cy="12.500" r=".8" fill="#dfdbd2" /></svg>
        <div className="flex h-5 w-5 items-center justify-center rounded-[2px] bg-[#dfdbd2] text-[12px] text-[#454540]"><T w={12}>Es</T></div>
        <svg className="ml-[11px]" width="10" height="16" viewBox="0 0 10 16" fill="none" stroke="#85827a" strokeWidth="1.300"><path d="M1 4.500 8.500 11.500 5 15V1L8.500 4.500 1 11.500" /></svg>
        <svg className="ml-[13px]" width="24" height="13" viewBox="0 0 24 13"><rect x=".6" y=".6" width="20.800" height="11.800" rx="2" fill="none" stroke="#dfdbd2" strokeWidth="1.200" /><rect x="2.500" y="2.500" width="17" height="8" fill="#dfdbd2" /><rect x="22" y="4" width="2" height="5" fill="#dfdbd2" /></svg>
        <svg className="ml-[11px]" width="21" height="16" viewBox="0 0 21 16"><path d="M0 5H3L7 2V14L3 11H0Z" fill="#dfdbd2" /><path d="M10 5.500C11.500 7 11.500 9 10 10.500M13 3.500C15.500 6 15.500 10 13 12.500M16.500 1.500C20 5 20 11 16.500 14.500" fill="none" stroke="#dfdbd2" strokeWidth="1.500" /></svg>
        <T w={36} className="ml-[12px] -translate-y-[1px] text-[14px]">00:38</T>
        <svg className="mr-[8px] ml-[13px]" width="16" height="16" viewBox="0 0 16 16" fill="none" stroke="#dfdbd2"><path d="M5.500 4A5 5 0 1 0 10.500 4M8 1V8" strokeWidth="1.800" /><path d="M3 3 4.500 4.500M13 3 11.500 4.500M0.500 8.500H3M13 8.500H15.500M3 13.500 4.500 12M13 13.500 11.500 12M8 16V14" strokeWidth="2" /></svg>
      </div>
      <div className="flex min-h-0 flex-1">
        <Launcher />
        <div className="flex min-w-0 flex-1 flex-col">
          <TabStrip />
          <AddressBar />
          <OutlookHeader />
          <div className="flex min-h-0 flex-1">
            <FolderPane />
            <div className="flex min-w-0 flex-1 flex-col">
              <CommandBar />
              <div className="flex min-h-0 flex-1">
                <MessageList />
                <Reader />
              </div>
            </div>
          </div>
          <div className="z-10 flex h-[49px] shrink-0 items-center border-t border-[#c9c8c6] bg-[#f2f1f0] text-[#4c4c4c]">
            <svg className="ml-[21px] shrink-0 -translate-y-[1px]" width="14" height="16" viewBox="0 0 14 16"><path d="M0.500 0.500H9L13.500 5V15.500H0.500Z" fill="#ececec" stroke="#8c8c8c" /><path d="M9 0.500V5H13.500" fill="#fff" stroke="#8c8c8c" /></svg>
            <T w={105} className="ml-[14px] translate-y-[1px] text-[15.5px]">accessKeys.csv</T>
            <svg className="ml-[48px] shrink-0" width="10" height="7" fill="none" stroke="#777" strokeWidth="1.900"><path d="M0.800 6 5 1.800 9.200 6" /></svg>
            <div className="ml-[18px] h-9 w-px bg-[#c6c5c3]" />
            <div className="-mt-[2px] ml-auto flex h-8 w-[124px] items-center justify-center rounded-[4px] border border-[#8b8b88] bg-[#e5e4e2] text-[14px] font-semibold"><T w={92} className="-translate-y-[1px]">Mostrar todo</T></div>
            <svg className="mr-[13px] ml-[13px] shrink-0 -translate-y-[1px]" width="10" height="10"><path d="M0.800 0.800 9.200 9.200M9.200 0.800 0.800 9.200" stroke="#777" strokeWidth="2" /></svg>
          </div>
        </div>
      </div>
    </div>
  );
}
